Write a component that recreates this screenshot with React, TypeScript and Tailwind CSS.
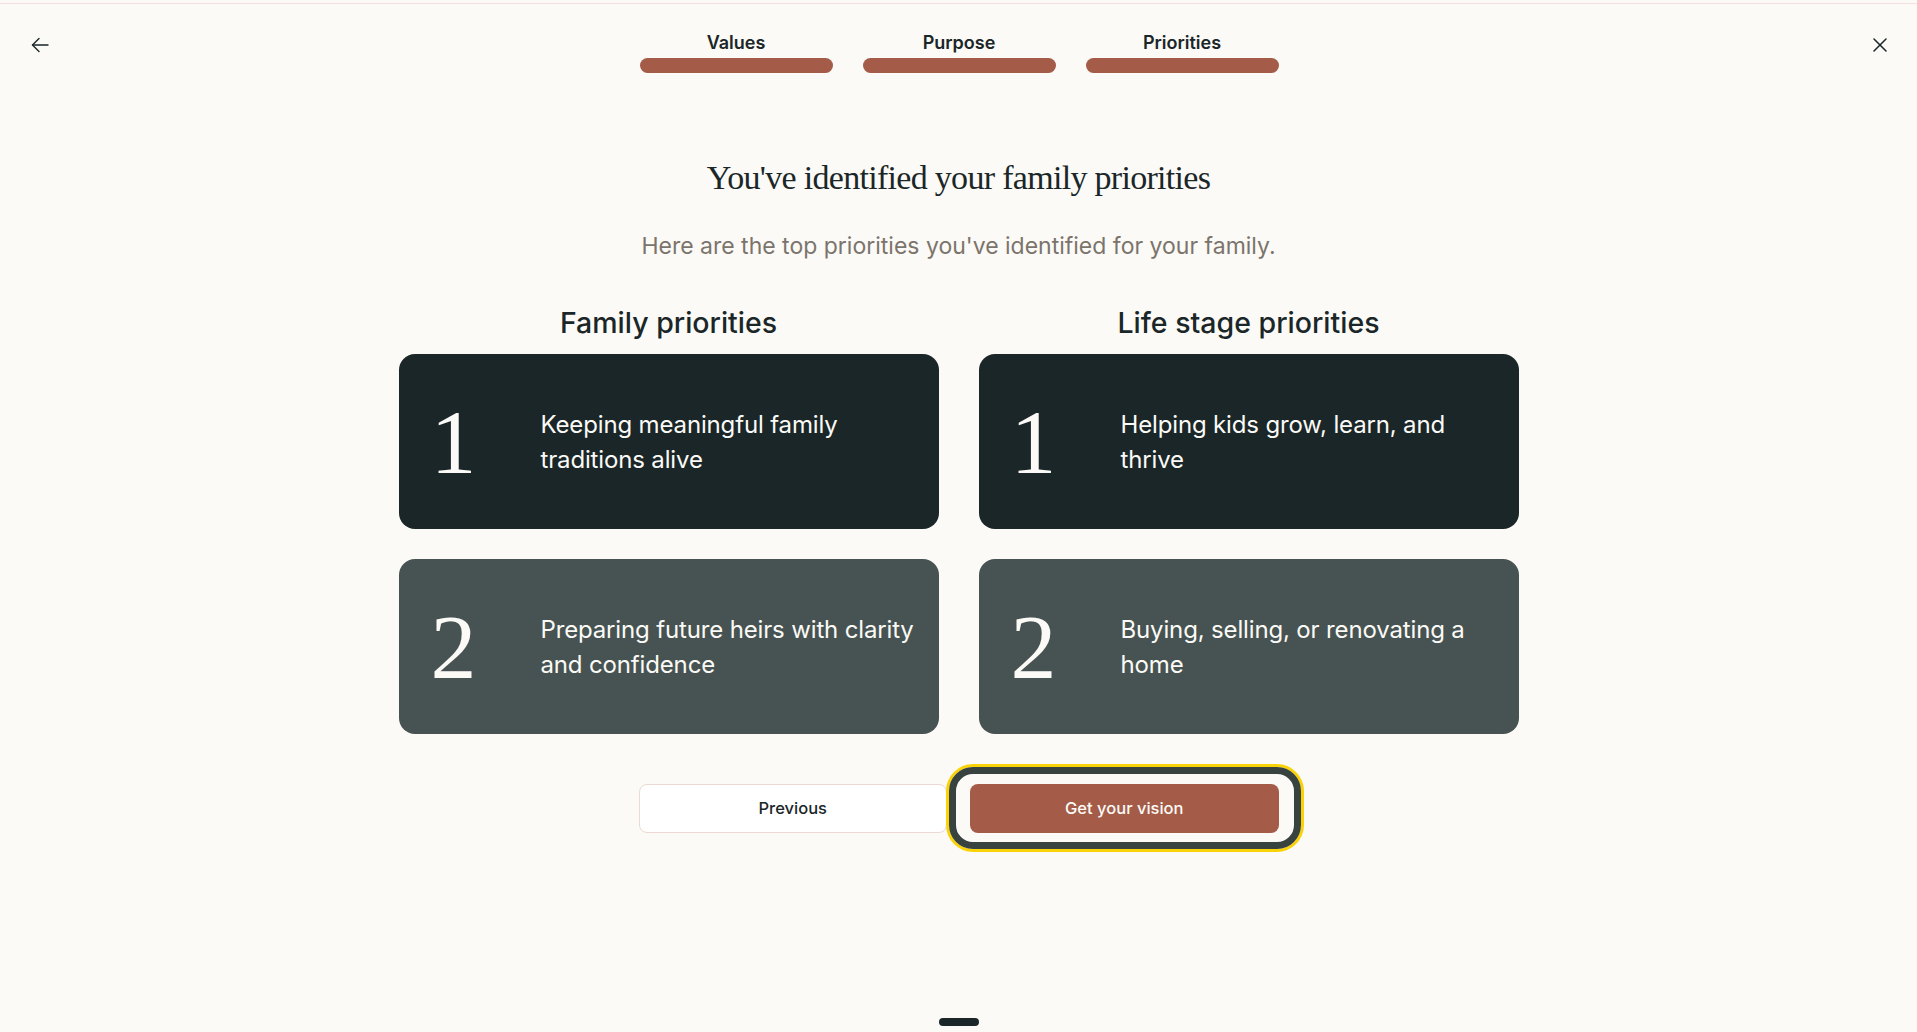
const familyPriorities = [
  { rank: 1, text: 'Keeping meaningful family traditions alive' },
  { rank: 2, text: 'Preparing future heirs with clarity and confidence' },
]

const lifeStagePriorities = [
  { rank: 1, text: 'Helping kids grow, learn, and thrive' },
  { rank: 2, text: 'Buying, selling, or renovating a home' },
]

const steps = ['Values', 'Purpose', 'Priorities']

function PriorityCard({ rank, text }: { rank: number; text: string }) {
  const bg = rank === 1 ? 'bg-[#1a2628]' : 'bg-[#475352]'
  return (
    <div className={`${bg} flex h-[175px] items-center rounded-2xl pl-[32px] pr-4`}>
      <div className="w-[110px] shrink-0 font-['Liberation_Serif',serif] text-[92px] leading-none text-[#fbfaf6]">
        {rank}
      </div>
      <p className="flex-1 text-[24px] leading-[35px] tracking-[-0.15px] text-[#fbfaf6]">{text}</p>
    </div>
  )
}

function PriorityColumn({ title, items }: { title: string; items: { rank: number; text: string }[] }) {
  return (
    <div className="flex flex-col">
      <h2 className="mb-[13px] text-center text-[28.5px] font-medium leading-[36px] text-[#1a2628]">{title}</h2>
      <div className="flex flex-col gap-[30px]">
        {items.map((item) => (
          <PriorityCard key={item.rank} rank={item.rank} text={item.text} />
        ))}
      </div>
    </div>
  )
}

export default function App() {
  return (
    <div className="flex min-h-screen flex-col bg-[#fbfaf6] pt-[3px] font-['Inter',sans-serif] text-[#1a2628]">
      <div className="h-px bg-[#f6e0df]" />

      {/* header with progress */}
      <header className="grid grid-cols-[1fr_auto_1fr] items-start pl-[31px] pr-[30px] pt-[27px]">
        <button className="mt-[2px] flex h-[24px] w-[18px] items-center justify-start">
          <svg width="18" height="16" viewBox="0 0 18 16" fill="none" stroke="#1a2628" strokeWidth="1.4" strokeLinecap="round" strokeLinejoin="round">
            <path d="M17 8H1.5" />
            <path d="M8 1.5L1.5 8L8 14.5" />
          </svg>
        </button>

        <div className="grid w-[639px] grid-cols-3 gap-x-[30px]">
          {steps.map((step) => (
            <div key={step} className="flex flex-col">
              <span className="text-center text-[18px] font-semibold leading-6 text-[#1a2628]">{step}</span>
              <div className="mt-[3px] h-[15px] rounded-full bg-[#a45c48]" />
            </div>
          ))}
        </div>

        <button className="mt-[2px] flex h-[24px] items-center justify-self-end">
          <svg width="14" height="14" viewBox="0 0 14 14" fill="none" stroke="#1a2628" strokeWidth="1.5" strokeLinecap="round">
            <path d="M1 1L13 13" />
            <path d="M13 1L1 13" />
          </svg>
        </button>
      </header>

      <main className="flex flex-col items-center">
        <h1 className="mt-[85px] font-['Liberation_Serif',serif] text-[34px] leading-[40px] tracking-[-0.7px] text-[#1a2628]">
          You've identified your family priorities
        </h1>
        <p className="mt-[32px] text-[23px] leading-8 text-[#7b746c]">
          Here are the top priorities you've identified for your family.
        </p>

        <div className="mt-[43px] grid w-[1120px] grid-cols-2 gap-x-10">
          <PriorityColumn title="Family priorities" items={familyPriorities} />
          <PriorityColumn title="Life stage priorities" items={lifeStagePriorities} />
        </div>

        <div className="mt-[50px] grid w-[640px] grid-cols-2 gap-[23px]">
          <button className="h-[49px] rounded-lg border border-[#ecd9d3] bg-white text-[16.5px] font-medium text-[#1a2628]">
            Previous
          </button>
          <div className="relative">
            <div className="pointer-events-none absolute -top-[17px] -bottom-[16px] -left-[21px] -right-[22px] rounded-[24px] border-[7px] border-[#38423f] shadow-[0_0_0_3px_#f9d307]" />
            <button className="relative h-[49px] w-full rounded-lg bg-[#a45c48] text-[16.5px] font-medium text-[#fbfaf6]">
              Get your vision
            </button>
          </div>
        </div>
      </main>

      <div className="mt-auto flex justify-center pb-[6px]">
        <div className="h-[8px] w-[40px] rounded-full bg-[#1a2628]" />
      </div>
    </div>
  )
}
